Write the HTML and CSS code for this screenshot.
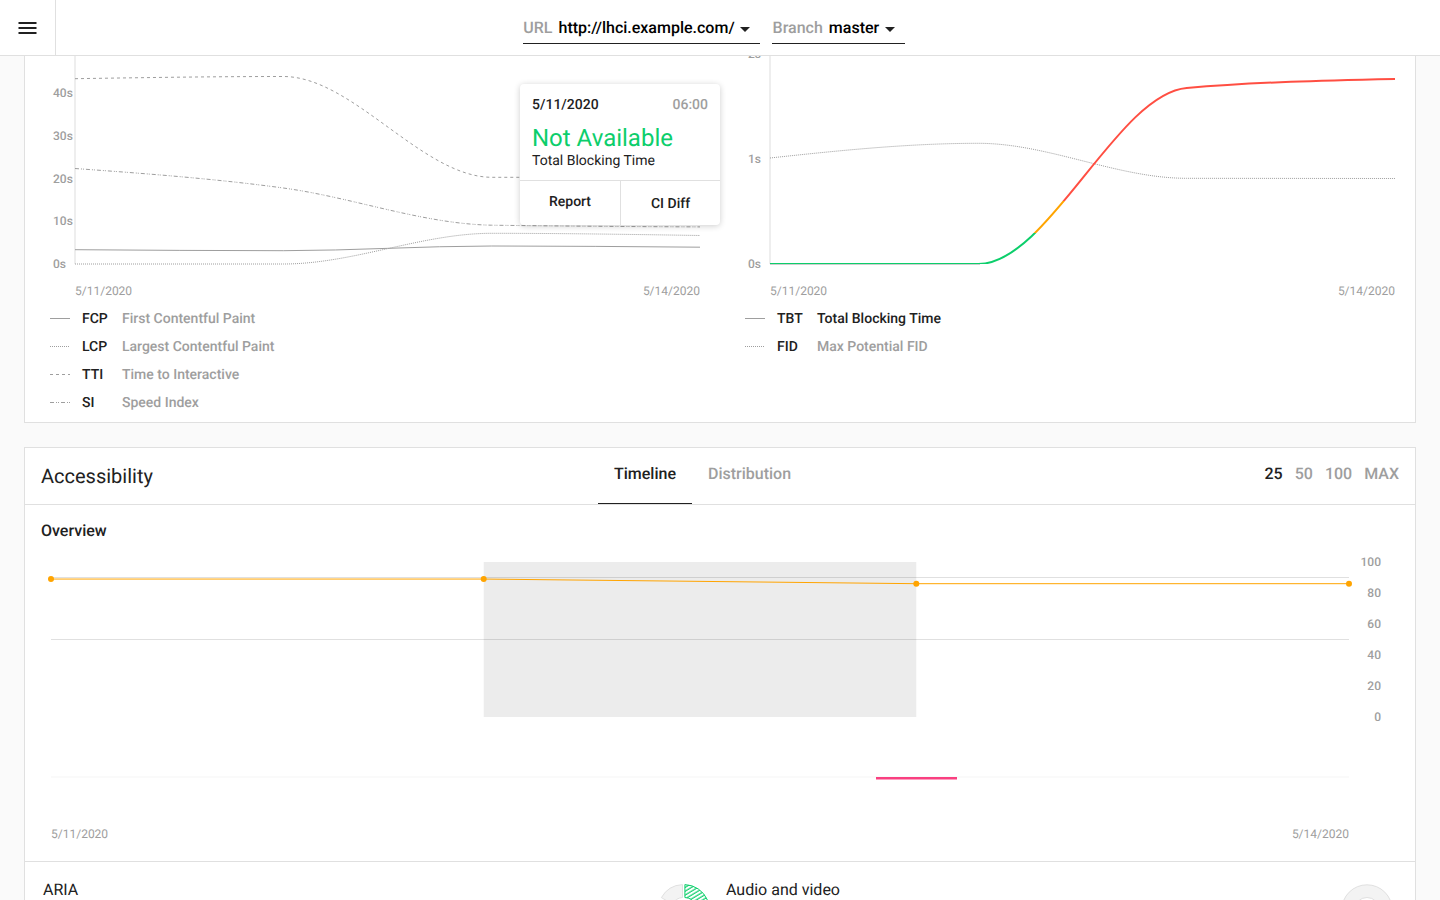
FILE: index.html
```html
<!DOCTYPE html>
<html lang="en">
<head>
<meta charset="utf-8">
<title>Lighthouse CI</title>
<link rel="stylesheet" href="styles.css">
</head>
<body>
<header class="topbar">
  <button class="menu" aria-label="Menu">
    <svg width="24" height="24" viewBox="-.5 0 24 24"><path d="M3 18h18v-2H3v2zm0-5h18v-2H3v2zm0-7v2h18V6H3z" fill="#212121"/></svg>
  </button>
  <div class="pickers">
    <div class="picker picker-url"><span class="picker-label">URL</span><span class="picker-value">http://lhci.example.com/</span><svg class="caret" width="10" height="5" viewBox="0 0 10 5"><path d="M0 0h10L5 5z" fill="#212121"/></svg></div>
    <div class="picker picker-branch"><span class="picker-label">Branch</span><span class="picker-value">master</span><svg class="caret" width="10" height="5" viewBox="0 0 10 5"><path d="M0 0h10L5 5z" fill="#212121"/></svg></div>
  </div>
</header>
<main class="content">
  <section class="card metrics">
    <div class="metric">
      <svg class="chart" width="695" height="248" viewBox="25 56 695 248">
        <path class="axis" d="M75 50V264"/>
        <g class="tick"><text x="53" y="97">40s</text><text x="53" y="140">30s</text><text x="53" y="183">20s</text><text x="53" y="225">10s</text><text x="53" y="268">0s</text></g>
        <path class="line" d="M75 249.7C144.4 250.2 213.9 250.7 283.3 250.7C352.8 250.7 422.2 246 491.7 246C561.1 246 630.6 246.6 700 247.2"/>
        <path class="line dot" d="M75 264H283.3C352.8 264 422.2 233.3 491.7 233.3C561.1 233.3 630.6 234.4 700 235.5"/>
        <path class="line dash" d="M75 78.7C144.4 77.6 213.9 76.5 283.3 76.5C352.8 76.5 422.2 177 491.7 177.3H700"/>
        <path class="line dashdot" d="M75 168.5C144.4 173.5 213.9 178.6 283.3 188C352.8 197.4 422.2 223.9 491.7 225.2C561.1 226.1 630.6 226.6 700 226.9"/>
        <text class="date" x="75" y="295">5/11/2020</text><text class="date end" x="700" y="295">5/14/2020</text>
      </svg>
      <ul class="legend">
        <li><svg width="20" height="1"><path class="line" d="M0 .5H20"/></svg><b>FCP</b><span>First Contentful Paint</span></li>
        <li><svg width="20" height="1"><path class="line dot" d="M0 .5H20"/></svg><b>LCP</b><span>Largest Contentful Paint</span></li>
        <li><svg width="20" height="1"><path class="line dash" d="M0 .5H20"/></svg><b>TTI</b><span>Time to Interactive</span></li>
        <li><svg width="20" height="1"><path class="line dashdot" d="M0 .5H20"/></svg><b>SI</b><span>Speed Index</span></li>
      </ul>
      <div class="tooltip">
        <div class="tip-head"><b>5/11/2020</b><span>06:00</span></div>
        <div class="tip-value">Not Available</div>
        <div class="tip-name">Total Blocking Time</div>
        <div class="tip-actions"><a class="report">Report</a><a class="diff">CI Diff</a></div>
      </div>
    </div>
    <div class="metric">
      <svg class="chart" width="695" height="248" viewBox="720 56 695 248">
        <defs><linearGradient id="score" gradientUnits="userSpaceOnUse" x1="0" y1="264" x2="0" y2="54">
          <stop offset=".15" stop-color="#0cce6b"/><stop offset=".15" stop-color="#ffa400"/><stop offset=".3" stop-color="#ffa400"/><stop offset=".3" stop-color="#ff4e42"/>
        </linearGradient><clipPath id="plot"><path d="M770 50H1400V264H770z"/></clipPath></defs>
        <path class="axis" d="M770 50V264"/>
        <g class="tick"><text x="748" y="58">2s</text><text x="748" y="163">1s</text><text x="748" y="268">0s</text></g>
        <path class="line dot" d="M770 158C839.4 150.5 908.9 143.3 978.3 143.3C1047.8 143.3 1117.2 178.3 1186.7 178.3L1395 178.5"/>
        <path class="line" d="M770 264H980"/>
        <path class="score" clip-path="url(#plot)" d="M770 264H978.3C1047.8 264 1117.2 94 1186.7 88C1256.1 82 1325.6 80.5 1395 79"/>
        <text class="date" x="770" y="295">5/11/2020</text><text class="date end" x="1395" y="295">5/14/2020</text>
      </svg>
      <ul class="legend">
        <li><svg width="20" height="1"><path class="line" d="M0 .5H20"/></svg><b>TBT</b><span class="active">Total Blocking Time</span></li>
        <li><svg width="20" height="1"><path class="line dot" d="M0 .5H20"/></svg><b>FID</b><span>Max Potential FID</span></li>
      </ul>
    </div>
  </section>

  <section class="card">
    <div class="card-head">
      <h2>Accessibility</h2>
      <nav class="tabs"><a class="tab active">Timeline</a><a class="tab">Distribution</a></nav>
      <div class="limits"><a class="active">25</a><a>50</a><a>100</a><a>MAX</a></div>
    </div>
    <div class="overview">
      <h3>Overview</h3>
      <svg class="chart" width="1390" height="317" viewBox="25 544 1390 317">
        <path class="guide" d="M51 577.5H1349M51 639.5H1349"/>
        <rect class="selection" x="483.7" y="562" width="432.6" height="155"/>
        <path class="trend" d="M51 579.05H483.7L916.3 583.7H1349"/>
        <g fill="#ffa400"><circle cx="51" cy="579.05" r="3"/><circle cx="483.7" cy="579.05" r="3"/><circle cx="916.3" cy="583.7" r="3"/><circle cx="1349" cy="583.7" r="3"/></g>
        <g class="tick end"><text x="1381" y="566">100</text><text x="1381" y="597">80</text><text x="1381" y="628">60</text><text x="1381" y="659">40</text><text x="1381" y="690">20</text><text x="1381" y="721">0</text></g>
        <rect x="51" y="776" width="1298" height="2" fill="#fafafa"/>
        <rect x="876" y="777" width="81" height="2.5" fill="#f94080"/>
        <text class="date" x="51" y="838">5/11/2020</text><text class="date end" x="1349" y="838">5/14/2020</text>
      </svg>
    </div>
    <div class="groups">
      <div class="group"><span>ARIA</span>
        <svg width="52" height="52" viewBox="-26 -26 52 52">
          <defs><pattern id="hatch" width="4" height="3.3" patternUnits="userSpaceOnUse" patternTransform="rotate(-31)"><path d="M0 1H4" stroke="#0cce6b" stroke-width="1.2"/></pattern></defs>
          <g fill="#f3f3f3" stroke="#e0e0e0"><path d="M-1.5 -25.4A25.5 25.5 0 0 0 -22.6 -12.4L-11.5 -6A12.5 12.5 0 0 1 -1.5 -12.5Z"/></g>
          <path d="M.9 -25.4A25.5 25.5 0 0 1 23.3 -10.3L12 -4A12.5 12.5 0 0 0 .9 -12.5Z" fill="url(#hatch)" stroke="#0cce6b"/>
        </svg>
      </div>
      <div class="group"><span>Audio and video</span>
        <svg width="52" height="52" viewBox="-26 -26 52 52"><circle r="25.2" fill="#f3f3f3" stroke="#e0e0e0"/><circle r="12.5" fill="#fff" stroke="#e0e0e0"/></svg>
      </div>
    </div>
  </section>
</main>
</body>
</html>
```
FILE: styles.css
```css
* { box-sizing: border-box; }
body {
  margin: 0;
  height: 900px;
  overflow: hidden;
  background: #fafafa;
  color: #212121;
  font-family: Roboto, sans-serif;
  font-size: 16px;
  text-rendering: geometricPrecision;
}
.topbar {
  height: 56px;
  display: flex;
  background: #fff;
  border-bottom: 1px solid #e0e0e0;
}
.menu {
  width: 56px;
  height: 55px;
  padding: 0;
  display: flex;
  align-items: center;
  justify-content: center;
  background: none;
  border: 0;
  border-right: 1px solid #e0e0e0;
}
.menu svg { margin-right: 1px; }
.pickers {
  flex: 1;
  display: flex;
  justify-content: center;
  gap: 12px;
  padding: 12px 68px 0 0;
}
.picker {
  height: 32px;
  display: flex;
  align-items: center;
  padding-left: .3px;
  border-bottom: 1px solid #212121;
  font-weight: 500;
}
.picker-url { width: 237px; }
.picker-branch { width: 133px; padding-left: .6px; }
.picker-label { margin-right: 6px; color: #9e9e9e; }
.picker-value { color: #000; }
.caret { margin: 3px 0 0 5.5px; }
.content {
  height: 844px;
  padding: 0 24px;
  overflow: hidden;
}
.card {
  margin-bottom: 24px;
  background: #fff;
  border: 1px solid #e0e0e0;
}
.metrics {
  height: 367px;
  border-top: 0;
  display: grid;
  grid-template-columns: 1fr 1fr;
}
.metric { position: relative; }
.chart { display: block; }
.axis { stroke: #eee; stroke-width: 2; }
.line { fill: none; stroke: #9e9e9e; stroke-width: 1; }
.dot { stroke-dasharray: 1 1; }
.dash { stroke-dasharray: 3 3; }
.dashdot { stroke-dasharray: 4 2 1 1 1 2; }
.score { fill: none; stroke: url(#score); stroke-width: 2; }
.tick { fill: #9e9e9e; font-size: 12px; font-weight: 500; }
.date { fill: #9e9e9e; font-size: 12px; }
.end { text-anchor: end; }
.legend {
  margin: 0;
  padding: 0 0 0 25px;
  list-style: none;
  font-size: 14px;
}
.legend li { height: 28px; display: flex; align-items: center; }
.legend b { width: 40px; margin-left: 12px; padding-top: 2px; font-weight: 500; }
.legend span { padding-top: 2px; color: #9e9e9e; font-weight: 500; }
.legend .active { color: #212121; }
.tooltip {
  position: absolute;
  left: 495px;
  top: 28px;
  width: 200px;
  height: 141px;
  background: #fff;
  border-radius: 4px;
  box-shadow: 0 1px 6px rgba(0, 0, 0, .2);
  font-size: 14px;
}
.tip-head {
  display: flex;
  justify-content: space-between;
  padding: 13px 12px 0;
  line-height: 17px;
  font-weight: 500;
}
.tip-head b { font-weight: 500; }
.tip-head span { color: #9e9e9e; }
.tip-value {
  padding: 10px 12px 0;
  color: #0cce6b;
  font-size: 24px;
  line-height: 28px;
}
.tip-name { padding: 1px 12px 0; line-height: 17px; }
.tip-actions {
  display: flex;
  height: 45px;
  margin-top: 10px;
  border-top: 1px solid #e0e0e0;
  font-weight: 500;
  text-align: center;
}
.report { width: 101px; line-height: 43px; border-right: 1px solid #e0e0e0; }
.diff { flex: 1; line-height: 47px; }
.card-head {
  height: 57px;
  display: grid;
  grid-template-columns: 573px auto 1fr;
  border-bottom: 1px solid #e0e0e0;
}
h2 {
  margin: 0;
  padding-left: 16px;
  font-size: 20px;
  font-weight: 400;
  line-height: 56px;
}
.tabs { display: flex; }
.tab {
  height: 56px;
  padding: 0 16px;
  line-height: 51px;
  font-weight: 500;
  color: #9e9e9e;
}
.tab.active { color: #212121; border-bottom: 1px solid #212121; }
.limits {
  display: flex;
  justify-content: flex-end;
  gap: 12px;
  padding-right: 16px;
  line-height: 51px;
  font-weight: 500;
  color: #9e9e9e;
}
.limits .active { color: #212121; }
h3 {
  height: 39px;
  margin: 0;
  padding: 16px 16px 0;
  font-size: 16px;
  font-weight: 500;
  line-height: 19px;
}
.guide { stroke: #e0e0e0; }
.trend { fill: none; stroke: #ffa400; stroke-width: 1; }
.selection { fill: #000; fill-opacity: .076; }
.groups {
  display: grid;
  grid-template-columns: 683px 683px;
  border-top: 1px solid #e0e0e0;
}
.group {
  display: flex;
  justify-content: space-between;
  padding: 22px 0 0 18px;
}
.group span { line-height: 12px; }
.group svg { margin-right: -2px; }
```
